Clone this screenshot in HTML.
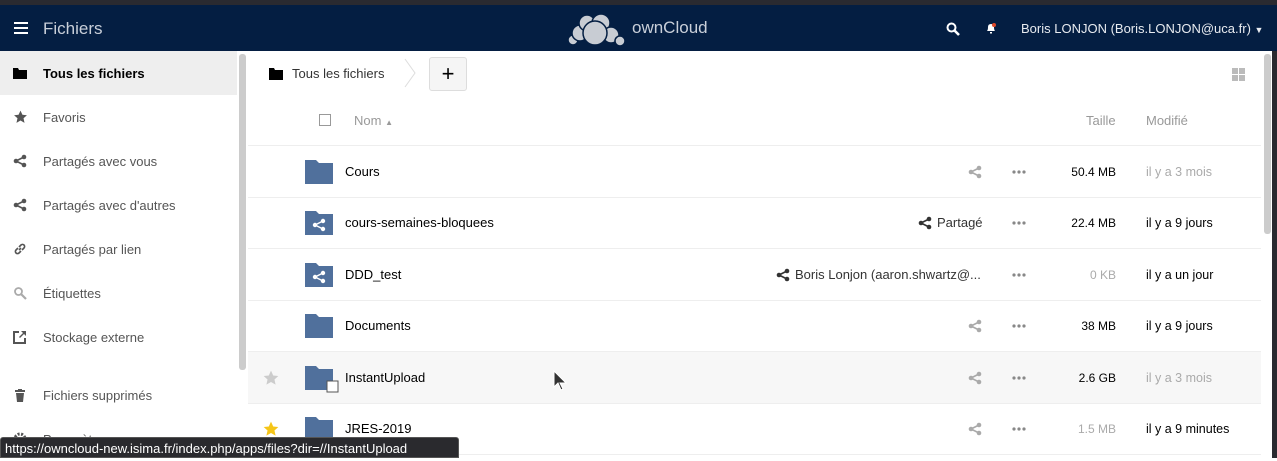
<!DOCTYPE html><html><head><meta charset="utf-8"><style>
*{box-sizing:border-box;margin:0;padding:0}
body{width:1277px;height:458px;overflow:hidden;font-family:"Liberation Sans",sans-serif;background:#fff;position:relative;font-size:13px;color:#000}
.top{position:absolute;left:0;top:0;width:1277px;height:5px;background:#2a2a30}
.hdr{position:absolute;left:0;top:5px;width:1277px;height:46px;background:#041e42;color:#fff}
.side{position:absolute;left:0;top:51px;width:237px;height:407px;background:#fff}
.si{height:44px;display:flex;align-items:center;padding-left:43px;color:#555;position:relative}
.si svg{position:absolute;left:13px;top:15px}
.row{position:absolute;left:248px;width:1013px;height:52px;border-bottom:1px solid #eee;display:flex;align-items:center}
.fold{position:absolute;left:57px;width:28px;height:24px}
.nm{position:absolute;left:97px;font-size:13px}
.sz{position:absolute;right:145px;font-size:12px;color:#000}
.md{position:absolute;left:898px;font-size:12.5px;color:#000}
.dots{position:absolute;left:764px;top:24px}
.sh{position:absolute;left:720px;top:19px}
</style></head><body>
<svg width="0" height="0" style="position:absolute"><defs>
<symbol id="shr" viewBox="0 0 14 14"><g fill="currentColor"><circle cx="3" cy="7" r="2.3"/><circle cx="11" cy="3" r="2.3"/><circle cx="11" cy="11" r="2.3"/></g><path d="M3 7 11 3M3 7 11 11" stroke="currentColor" stroke-width="1.6"/></symbol>
<symbol id="dt" viewBox="0 0 14 4"><g fill="#888"><circle cx="2" cy="2" r="1.6"/><circle cx="7" cy="2" r="1.6"/><circle cx="12" cy="2" r="1.6"/></g></symbol>
</defs></svg>
<div class="top"></div>
<div class="hdr">
 <div style="position:absolute;left:14px;top:17px;width:14px;height:2px;background:#fff;box-shadow:0 5px #fff,0 10px #fff"></div>
 <div style="position:absolute;left:43px;top:14px;font-size:17px;color:#c9cfd9">Fichiers</div>
 <svg style="position:absolute;left:565px;top:6px" width="62" height="36" viewBox="0 0 62 36"><g fill="#c8ccd3" stroke="#041e42" stroke-width="1.5"><circle cx="8" cy="29" r="5"/><circle cx="15" cy="22" r="8"/><circle cx="22" cy="12" r="8"/><circle cx="36" cy="12" r="9"/><circle cx="46" cy="24" r="8"/><circle cx="55" cy="30" r="5"/><circle cx="30" cy="22" r="12"/></g></svg>
 <div style="position:absolute;left:632px;top:13px;font-size:17px;color:#c9cfd9">ownCloud</div>
 <svg style="position:absolute;left:946px;top:17px" width="14" height="14" viewBox="0 0 14 14"><circle cx="5.5" cy="5.5" r="4" fill="none" stroke="#fff" stroke-width="2"/><path d="M8.5 8.5 13 13" stroke="#fff" stroke-width="2.6"/></svg>
 <svg style="position:absolute;left:985px;top:17px" width="12" height="13" viewBox="0 0 12 13"><path d="M2 9 Q3 8 3 5 Q3 2 6 2 Q9 2 9 5 Q9 8 10 9Z M5 10h2v1.5H5z" fill="#fff"/><circle cx="9" cy="3" r="2" fill="#e04a2a"/></svg>
 <div style="position:absolute;left:1021px;top:16px;font-size:13px;color:#e8ebf0">Boris LONJON (Boris.LONJON@uca.fr) <span style="font-size:9px">▼</span></div>
</div>
<div class="side">
 <div class="si" style="background:#eee;color:#000;font-weight:bold"><svg width="14" height="14" viewBox="0 0 14 14"><path d="M0 2h5l1 2h8v9H0z" fill="#000"/></svg>Tous les fichiers</div>
 <div class="si"><svg width="15" height="14" viewBox="0 0 24 24"><path d="M12 1l3.3 7.2 7.7.8-5.8 5.2 1.7 7.8L12 18l-6.9 4 1.7-7.8L1 9l7.7-.8z" fill="#555"/></svg>Favoris</div>
 <div class="si"><svg width="14" height="14" style="color:#555"><use href="#shr"/></svg>Partagés avec vous</div>
 <div class="si"><svg width="14" height="14" style="color:#555"><use href="#shr"/></svg>Partagés avec d'autres</div>
 <div class="si"><svg width="14" height="14" viewBox="0 0 14 14"><path d="M6 8 8 6M5 6 3 8a2 2 0 0 0 3 3l2-2M9 8l2-2a2 2 0 0 0-3-3L6 5" fill="none" stroke="#555" stroke-width="1.6"/></svg>Partagés par lien</div>
 <div class="si"><svg width="14" height="14" viewBox="0 0 14 14"><circle cx="5.5" cy="5.5" r="3.5" fill="none" stroke="#aaa" stroke-width="1.8"/><path d="M8 8l5 5" stroke="#aaa" stroke-width="2.2"/></svg>Étiquettes</div>
 <div class="si"><svg width="14" height="14" viewBox="0 0 14 14"><path d="M6 2H1v11h11V8" fill="none" stroke="#555" stroke-width="2"/><path d="M8 1h5v5L11 4 7 8 6 7l4-4z" fill="#555"/></svg>Stockage externe</div>
 <div style="height:14px"></div>
 <div class="si"><svg width="14" height="14" viewBox="0 0 14 14"><path d="M2 2h10v2H2zM5 1h4v1H5zM3 5h8l-1 9H4z" fill="#555"/></svg>Fichiers supprimés</div>
 <div class="si"><svg width="14" height="14" viewBox="0 0 14 14"><circle cx="7" cy="7" r="5" fill="none" stroke="#555" stroke-width="3" stroke-dasharray="2 1.5"/></svg>Paramètres</div>
</div>
<div style="position:absolute;left:237px;top:51px;width:11px;height:322px;background:#fff"><div style="margin:3px auto;width:7px;height:316px;background:#ccc;border-radius:3px"></div></div>
<div style="position:absolute;left:1262px;top:51px;width:10px;height:407px;background:#fff"><div style="margin:3px auto;width:7px;height:180px;background:#ccc;border-radius:3px"></div></div>
<div style="position:absolute;left:1272px;top:51px;width:5px;height:407px;background:#2a2a30"></div>
<svg style="position:absolute;left:269px;top:67px" width="14" height="13" viewBox="0 0 14 13"><path d="M0 1h5l1 2h8v10H0z" fill="#000"/></svg>
<div style="position:absolute;left:292px;top:66px;color:#333">Tous les fichiers</div>
<svg style="position:absolute;left:403px;top:58px" width="14" height="30"><path d="M2 1 12 15 2 29" fill="none" stroke="#ddd"/></svg>
<div style="position:absolute;left:429px;top:57px;width:38px;height:34px;border:1px solid #ddd;border-radius:3px;background:#f5f5f5;text-align:center;font-size:22px;line-height:31px">+</div>
<svg style="position:absolute;left:1232px;top:68px" width="13" height="13"><g fill="#bbb"><rect width="6" height="6"/><rect x="7" width="6" height="6"/><rect y="7" width="6" height="6"/><rect x="7" y="7" width="6" height="6"/></g></svg>
<div class="row" style="top:95px;height:51px;color:#999">
 <div style="position:absolute;left:71px;width:12px;height:12px;border:1px solid #999"></div>
 <div style="position:absolute;left:106px">Nom <span style="font-size:8px">▲</span></div>
 <div style="position:absolute;left:838px">Taille</div>
 <div style="position:absolute;left:898px">Modifié</div>
</div>
<div class="row" style="top:146px"><svg class="fold" viewBox="0 0 28 24"><path d="M0 0h11l3 3h14v21H0z" fill="#50709c"/></svg><span class="nm">Cours</span><svg class="sh" width="14" height="14" style="color:#aaa"><use href="#shr"/></svg><svg class="dots" width="14" height="4"><use href="#dt"/></svg><span class="sz">50.4 MB</span><span class="md" style="color:#aaa">il y a 3 mois</span></div>
<div class="row" style="top:197px"><svg class="fold" viewBox="0 0 28 24"><path d="M0 0h11l3 3h14v21H0z" fill="#50709c"/><g fill="#fff"><circle cx="10" cy="14" r="2.2"/><circle cx="18" cy="10" r="2.2"/><circle cx="18" cy="18" r="2.2"/></g><path d="M10 14 18 10M10 14 18 18" stroke="#fff" stroke-width="1.5"/></svg><span class="nm">cours-semaines-bloquees</span><svg style="position:absolute;left:670px;top:19px;color:#333" width="14" height="14"><use href="#shr"/></svg><span style="position:absolute;left:689px;color:#333">Partagé</span><svg class="dots" width="14" height="4"><use href="#dt"/></svg><span class="sz">22.4 MB</span><span class="md">il y a 9 jours</span></div>
<div class="row" style="top:249px"><svg class="fold" viewBox="0 0 28 24"><path d="M0 0h11l3 3h14v21H0z" fill="#50709c"/><g fill="#fff"><circle cx="10" cy="14" r="2.2"/><circle cx="18" cy="10" r="2.2"/><circle cx="18" cy="18" r="2.2"/></g><path d="M10 14 18 10M10 14 18 18" stroke="#fff" stroke-width="1.5"/></svg><span class="nm">DDD_test</span><svg style="position:absolute;left:528px;top:19px;color:#333" width="14" height="14"><use href="#shr"/></svg><span style="position:absolute;left:547px;color:#333">Boris Lonjon (aaron.shwartz@...</span><svg class="dots" width="14" height="4"><use href="#dt"/></svg><span class="sz" style="color:#aaa">0 KB</span><span class="md">il y a un jour</span></div>
<div class="row" style="top:300px"><svg class="fold" viewBox="0 0 28 24"><path d="M0 0h11l3 3h14v21H0z" fill="#50709c"/></svg><span class="nm">Documents</span><svg class="sh" width="14" height="14" style="color:#aaa"><use href="#shr"/></svg><svg class="dots" width="14" height="4"><use href="#dt"/></svg><span class="sz">38 MB</span><span class="md">il y a 9 jours</span></div>
<div class="row" style="top:352px;background:#f7f7f7"><svg style="position:absolute;left:15px" width="16" height="16" viewBox="0 0 24 24"><path d="M12 1l3.3 7.2 7.7.8-5.8 5.2 1.7 7.8L12 18l-6.9 4 1.7-7.8L1 9l7.7-.8z" fill="#ccc"/></svg><svg class="fold" viewBox="0 0 28 24" style="overflow:visible"><path d="M0 0h11l3 3h14v21H0z" fill="#50709c"/><rect x="22" y="15" width="11" height="11" fill="#fff" stroke="#555"/></svg><span class="nm">InstantUpload</span><svg class="sh" width="14" height="14" style="color:#aaa"><use href="#shr"/></svg><svg class="dots" width="14" height="4"><use href="#dt"/></svg><span class="sz">2.6 GB</span><span class="md" style="color:#aaa">il y a 3 mois</span></div>
<div class="row" style="top:403px"><svg style="position:absolute;left:15px" width="16" height="16" viewBox="0 0 24 24"><path d="M12 1l3.3 7.2 7.7.8-5.8 5.2 1.7 7.8L12 18l-6.9 4 1.7-7.8L1 9l7.7-.8z" fill="#f5c518"/></svg><svg class="fold" viewBox="0 0 28 24"><path d="M0 0h11l3 3h14v21H0z" fill="#50709c"/></svg><span class="nm">JRES-2019</span><svg class="sh" width="14" height="14" style="color:#aaa"><use href="#shr"/></svg><svg class="dots" width="14" height="4"><use href="#dt"/></svg><span class="sz" style="color:#aaa">1.5 MB</span><span class="md">il y a 9 minutes</span></div>
<div style="position:absolute;left:0;top:437px;width:459px;height:21px;background:#2a2a2e;border:1px solid #555;border-radius:3px 3px 0 0;color:#fff;font-size:13px;padding:3px 4px;white-space:nowrap">https://owncloud-new.isima.fr/index.php/apps/files?dir=//InstantUpload</div>
<svg style="position:absolute;left:553px;top:370px" width="14" height="22"><path d="M1 1v16l4-4 3 7 2-1-3-6h6z" fill="#333" stroke="#fff"/></svg>
</body></html>
